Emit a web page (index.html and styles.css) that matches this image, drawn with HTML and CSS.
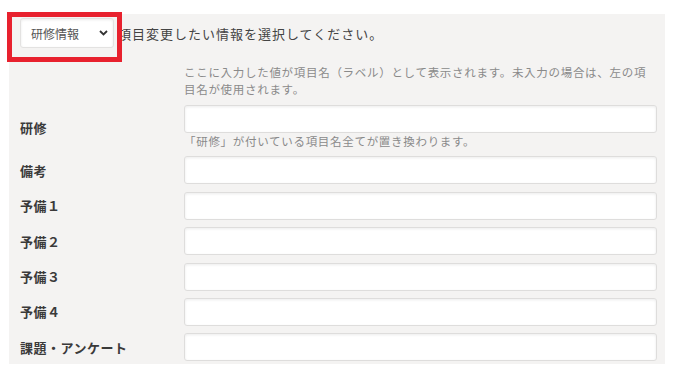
FILE: index.html
```html
<!DOCTYPE html>
<html lang="ja">
  <head>
    <meta charset="UTF-8" />
    <meta name="viewport" content="width=device-width, initial-scale=1.0" />
    <title>項目名設定</title>
    <link rel="stylesheet" href="styles.css">
  </head>
  <body>
    <div class="mark"></div>
    <div class="panel">
      <div class="top">
        <div class="select-wrap">
          <select class="picker">
            <option>研修情報</option>
          </select>
          <svg class="chev" width="9" height="6" viewBox="0 0 9 6">
            <path d="M1 1 L4.5 4.5 L8 1" fill="none" stroke="#333" stroke-width="1.8" />
          </svg>
        </div>
        <p class="lead">項目変更したい情報を選択してください。</p>
      </div>
      <p class="intro">ここに入力した値が項目名（ラベル）として表示されます。未入力の場合は、左の項目名が使用されます。</p>
      <div class="rows">
        <div class="row">
          <label class="name">研修</label>
          <div class="field">
            <input type="text" />
            <p class="hint">「研修」が付いている項目名全てが置き換わります。</p>
          </div>
        </div>
        <div class="row">
          <label class="name">備考</label>
          <div class="field"><input type="text" /></div>
        </div>
        <div class="row">
          <label class="name">予備１</label>
          <div class="field"><input type="text" /></div>
        </div>
        <div class="row">
          <label class="name">予備２</label>
          <div class="field"><input type="text" /></div>
        </div>
        <div class="row">
          <label class="name">予備３</label>
          <div class="field"><input type="text" /></div>
        </div>
        <div class="row">
          <label class="name">予備４</label>
          <div class="field"><input type="text" /></div>
        </div>
        <div class="row">
          <label class="name">課題・アンケート</label>
          <div class="field"><input type="text" /></div>
        </div>
      </div>
    </div>
  </body>
</html>
```

FILE: styles.css
```css
*{
    padding: 0;
    margin: 0;
    box-sizing: border-box;
}
body{
    background-color: #fff;
    font-family: "Noto Sans CJK JP", "Noto Sans", sans-serif;
    color: #444;
    position: relative;
}
.panel{
    margin: 14px 11px 9px 9px;
    padding: 4px 8px 3px 11px;
    background-color: #f4f3f2;
}
.top{
    display: flex;
    align-items: center;
    gap: 4px;
    height: 30px;
}
.select-wrap{
    position: relative;
    width: 94px;
    height: 30px;
}
.picker{
    appearance: none;
    -webkit-appearance: none;
    width: 100%;
    height: 100%;
    padding-left: 10px;
    font-family: inherit;
    font-size: 12px;
    color: #555;
    background-color: #fff;
    border: 1px solid #e3e2e1;
    border-radius: 3px;
    box-shadow: inset 0 1px 3px rgba(0,0,0,0.08);
}
.chev{
    position: absolute;
    right: 6px;
    top: 12px;
}
.lead{
    font-size: 13px;
    letter-spacing: 1px;
    color: #444;
}
.intro{
    margin: 16px 0 0 164px;
    font-size: 11.5px;
    letter-spacing: 0.7px;
    line-height: 17px;
    color: #8a8a8a;
}
.rows{
    margin-top: 7px;
    display: flex;
    flex-direction: column;
    gap: 7.4px;
}
.row{
    display: grid;
    grid-template-columns: 164px 1fr;
    align-items: center;
}
.name{
    font-size: 13px;
    font-weight: bold;
    letter-spacing: 0.5px;
    color: #3a3a3a;
}
.field input{
    display: block;
    width: 100%;
    height: 28px;
    background-color: #fff;
    border: 1px solid #dedddc;
    border-radius: 3px;
    box-shadow: inset 0 1px 3px rgba(0,0,0,0.08);
}
.hint{
    margin-top: 1px;
    font-size: 11.5px;
    letter-spacing: 0.7px;
    line-height: 15px;
    color: #8a8a8a;
}
.mark{
    position: absolute;
    left: 7px;
    top: 12px;
    width: 115px;
    height: 50px;
    border: 5px solid #e8212e;
    z-index: 2;
}
```
